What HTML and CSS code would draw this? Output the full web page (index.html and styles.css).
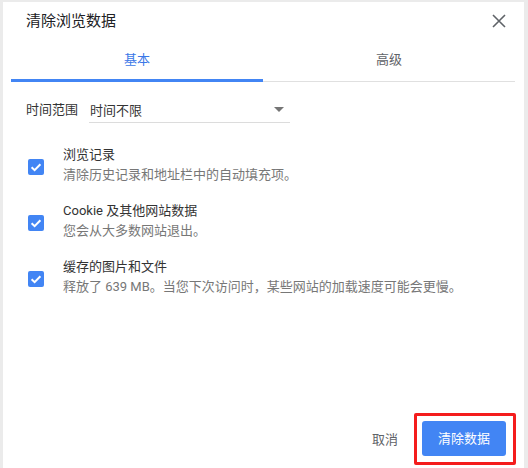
FILE: index.html
```html
<!DOCTYPE html>
<html lang="zh-CN">
<head>
<meta charset="utf-8">
<title>清除浏览数据</title>
<link rel="stylesheet" href="styles.css">
</head>
<body>
<div class="dialog">
  <div class="header">
    <div class="title">清除浏览数据</div>
    <svg class="close" width="14" height="14" viewBox="0 0 14 14"><path d="M1 1 L13 13 M13 1 L1 13" stroke="#5f6368" stroke-width="1.6" fill="none"/></svg>
  </div>
  <div class="tabs">
    <div class="tab active">基本</div>
    <div class="tab">高级</div>
  </div>
  <div class="range-row">
    <span class="range-label">时间范围</span>
    <div class="select">
      <span class="select-value">时间不限</span>
      <span class="arrow"></span>
    </div>
  </div>
  <div class="options">
    <div class="option">
      <span class="checkbox"><svg width="16" height="16" viewBox="0 0 16 16"><path d="M3.6 8.2 L6.6 11.1 L12.4 5.2" stroke="#fff" stroke-width="2" fill="none"/></svg></span>
      <div class="option-text">
        <div class="option-title">浏览记录</div>
        <div class="option-sub">清除历史记录和地址栏中的自动填充项。</div>
      </div>
    </div>
    <div class="option">
      <span class="checkbox"><svg width="16" height="16" viewBox="0 0 16 16"><path d="M3.6 8.2 L6.6 11.1 L12.4 5.2" stroke="#fff" stroke-width="2" fill="none"/></svg></span>
      <div class="option-text">
        <div class="option-title">Cookie 及其他网站数据</div>
        <div class="option-sub">您会从大多数网站退出。</div>
      </div>
    </div>
    <div class="option">
      <span class="checkbox"><svg width="16" height="16" viewBox="0 0 16 16"><path d="M3.6 8.2 L6.6 11.1 L12.4 5.2" stroke="#fff" stroke-width="2" fill="none"/></svg></span>
      <div class="option-text">
        <div class="option-title">缓存的图片和文件</div>
        <div class="option-sub">释放了 639 MB。当您下次访问时，某些网站的加载速度可能会更慢。</div>
      </div>
    </div>
  </div>
  <div class="footer">
    <span class="cancel">取消</span>
    <span class="confirm-wrap">
      <span class="confirm">清除数据</span>
      <span class="highlight"></span>
    </span>
  </div>
</div>
</body>
</html>
```
FILE: styles.css
```css
html, body {
  margin: 0;
  padding: 0;
  background: #ebebeb;
}
body {
  font-family: Roboto, "Noto Sans CJK SC", sans-serif;
  font-size: 13px;
  color: #333;
}
.dialog {
  box-sizing: border-box;
  margin: 2px 0 0 3px;
  width: 521px;
  height: 466px;
  background: #fff;
  display: flex;
  flex-direction: column;
}
.header {
  display: flex;
  align-items: center;
  justify-content: space-between;
  height: 38px;
  padding: 0 18px 0 23px;
}
.title {
  font-size: 15px;
  line-height: 20px;
  color: #202124;
}
.close {
  display: block;
}
.tabs {
  display: flex;
  margin: 0 9px 0 8px;
  border-bottom: 1px solid #e0e0e0;
}
.tab {
  flex: 1;
  text-align: center;
  height: 41px;
  box-sizing: border-box;
  padding-top: 10px;
  line-height: 20px;
  font-size: 13px;
  color: #5f6368;
}
.tab.active {
  color: #3b78e7;
  height: 42px;
  margin-bottom: -1px;
  border-bottom: 3px solid #4285f4;
}
.range-row {
  display: flex;
  align-items: center;
  margin: 14px 0 0 23px;
}
.range-label {
  color: #333;
  margin-right: 11px;
  line-height: 26px;
}
.select {
  box-sizing: border-box;
  width: 201px;
  height: 27px;
  display: flex;
  align-items: center;
  justify-content: space-between;
  border-bottom: 1px solid #dcdcdc;
  padding: 0 6px 0 1px;
  color: #333;
}
.arrow {
  width: 0;
  height: 0;
  border-left: 5px solid transparent;
  border-right: 5px solid transparent;
  border-top: 5px solid #757575;
}
.options {
  display: flex;
  flex-direction: column;
  gap: 16px;
  margin: 22px 0 0 25px;
}
.option {
  display: flex;
  align-items: flex-start;
}
.checkbox {
  width: 16px;
  height: 16px;
  border-radius: 2px;
  background: #4285f4;
  margin-top: 14px;
  margin-right: 19px;
  flex: none;
}
.checkbox svg {
  display: block;
}
.option-text {
  line-height: 20px;
}
.option-title {
  color: #333;
}
.option-sub {
  color: #777;
}
.footer {
  margin-top: auto;
  display: flex;
  align-items: center;
  justify-content: flex-end;
  padding: 0 18px 12px 0;
}
.cancel {
  color: #5f6368;
  margin-right: 24px;
}
.confirm-wrap {
  position: relative;
  display: block;
}
.confirm {
  display: block;
  width: 84px;
  height: 35px;
  line-height: 35px;
  text-align: center;
  background: #4285f4;
  color: #fff;
  border-radius: 3px;
}
.highlight {
  position: absolute;
  left: -8px;
  top: -8px;
  right: -10px;
  bottom: -9px;
  border: 3px solid #f41c1c;
  border-radius: 2px;
}
```
